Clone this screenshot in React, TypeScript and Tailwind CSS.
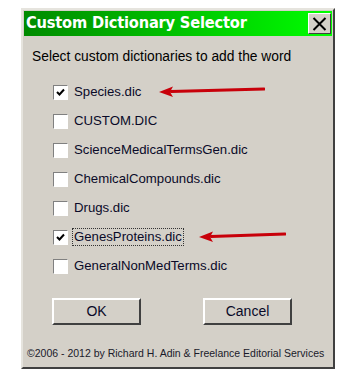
import React, { useState } from 'react';

const items = [
  'Species.dic',
  'CUSTOM.DIC',
  'ScienceMedicalTermsGen.dic',
  'ChemicalCompounds.dic',
  'Drugs.dic',
  'GenesProteins.dic',
  'GeneralNonMedTerms.dic',
];

const Arrow = ({ width }: { width: number }) => (
  <svg width={width} height="12" viewBox={`0 0 ${width} 12`} className="shrink-0">
    <path d={`M${width - 1} 3 L12 5.5`} stroke="#c8000a" strokeWidth="3" strokeLinecap="round" />
    <path d="M0 6 L14 0.5 L11 6 L14 11 Z" fill="#c8000a" />
  </svg>
);

const App: React.FC = () => {
  const [checked, setChecked] = useState<boolean[]>([true, false, false, false, false, true, false]);

  const toggle = (i: number) => setChecked((c) => c.map((v, j) => (j === i ? !v : v)));

  return (
    <div className="w-[352px] h-[383px] bg-white pt-[8px] pl-[21px]" style={{ fontFamily: 'Tahoma, "Liberation Sans", sans-serif' }}>
      <div className="w-[314px] h-[361px] flex flex-col bg-[#d4d0c8] border-t-2 border-l-2 border-t-[#e6e4de] border-l-[#e6e4de] border-r-2 border-b-2 border-r-[#404040] border-b-[#404040]">
        <div className="h-[25px] mx-[1px] mt-[1px] flex items-center justify-between pl-[2px] pr-[1px] bg-gradient-to-r from-[#008a00] to-[#00ff00]">
          <span className="text-white font-bold text-[16.3px] leading-none" style={{ fontFamily: '"DejaVu Sans Condensed", "DejaVu Sans", sans-serif', letterSpacing: '-0.2px' }}>
            Custom Dictionary Selector
          </span>
          <button className="w-[23px] h-[21px] flex items-center justify-center bg-[#d4d0c8] border border-t-white border-l-white border-r-[#404040] border-b-[#404040]">
            <svg width="15" height="14" viewBox="0 0 15 14">
              <path d="M1.5 1 L13.5 13 M13.5 1 L1.5 13" stroke="#000" strokeWidth="2" />
            </svg>
          </button>
        </div>

        <div className="pl-[9px] pt-[14px] text-[13.8px] text-[#000] leading-none" style={{ fontFamily: '"Liberation Sans", Arial, sans-serif' }}>
          Select custom dictionaries to add the word
        </div>

        <div className="flex flex-col pl-[30px] pt-[22px] gap-[16px]">
          {items.map((label, i) => (
            <div key={label} className="flex items-center h-[13px]">
              <div
                onClick={() => toggle(i)}
                className="w-[15px] h-[15px] shrink-0 bg-white flex items-center justify-center border border-t-[#808080] border-l-[#808080] border-r-white border-b-white"
              >
                {checked[i] && (
                  <svg width="9" height="9" viewBox="0 0 9 9">
                    <path d="M1 4 L3.5 6.5 L8 1.5" stroke="#000" strokeWidth="2" fill="none" />
                  </svg>
                )}
              </div>
              <span
                className={`ml-[4px] px-[1px] text-[13.2px] text-[#0a0a28] leading-[16px] border border-dotted ${i === 5 ? 'border-[#333]' : 'border-transparent'}`}
                style={{ fontFamily: '"Liberation Sans", Arial, sans-serif' }}
              >
                {label}
              </span>
              {i === 0 && (
                <div className="ml-[16px]">
                  <Arrow width={106} />
                </div>
              )}
              {i === 5 && (
                <div className="ml-[15px]">
                  <Arrow width={87} />
                </div>
              )}
            </div>
          ))}
        </div>

        <div className="flex pl-[29px] gap-[62px] mt-[25px]">
          <button className="w-[89px] h-[27px] bg-[#d4d0c8] text-[14px] text-[#0a0a28] border-t-2 border-l-2 border-t-white border-l-white border-r-2 border-b-2 border-r-[#404040] border-b-[#404040]" style={{ fontFamily: '"Liberation Sans", Arial, sans-serif' }}>
            OK
          </button>
          <button className="w-[89px] h-[27px] bg-[#d4d0c8] text-[14px] text-[#0a0a28] border-t-2 border-l-2 border-t-white border-l-white border-r-2 border-b-2 border-r-[#404040] border-b-[#404040]" style={{ fontFamily: '"Liberation Sans", Arial, sans-serif' }}>
            Cancel
          </button>
        </div>

        <div className="mt-[23px] pl-[4px] text-[10.5px] whitespace-nowrap text-[#1a1a2a] leading-none" style={{ fontFamily: '"Liberation Sans", Arial, sans-serif' }}>
          ©2006 - 2012 by Richard H. Adin &amp; Freelance Editorial Services
        </div>
      </div>
    </div>
  );
};

export default App;
